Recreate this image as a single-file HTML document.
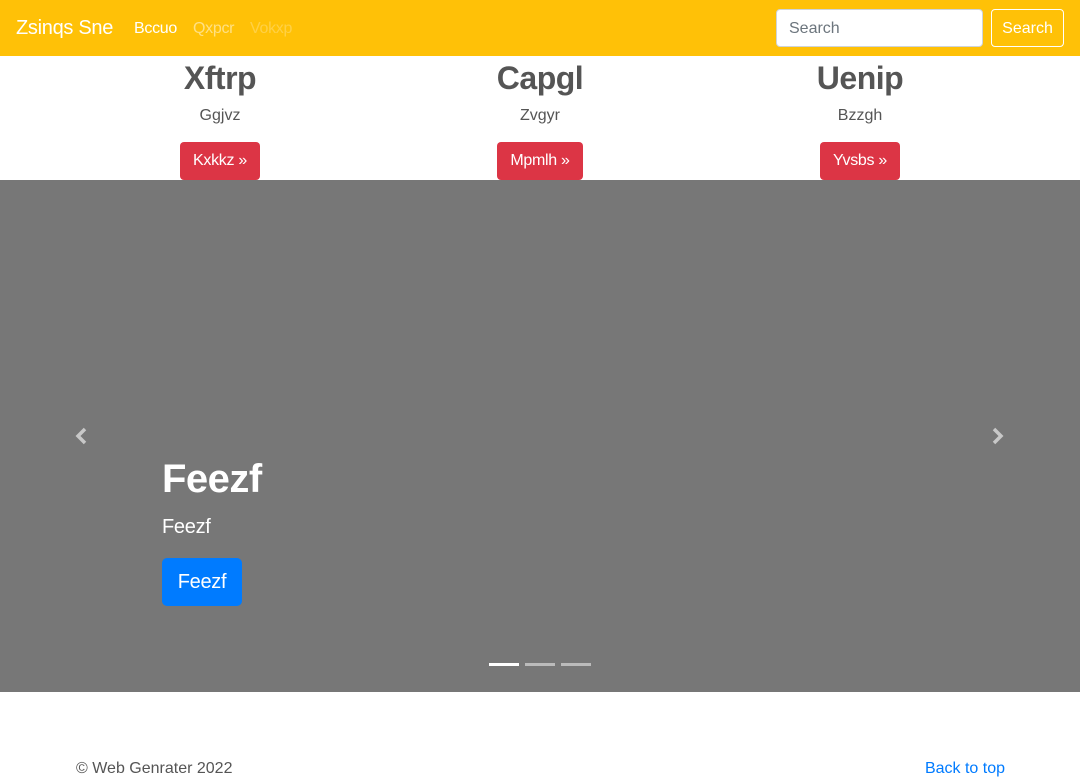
<!DOCTYPE html>
<html><head><style>
*{box-sizing:border-box;margin:0;padding:0}
body{width:1080px;height:780px;overflow:hidden;font-family:"Liberation Sans",sans-serif;background:#fff;color:#212529;position:relative}
nav{position:absolute;top:0;left:0;width:1080px;height:56px;background:#ffc107}
.brand{position:absolute;left:16px;top:17px;font-size:20px;color:#fff;letter-spacing:-0.3px}
.nl{position:absolute;top:20px;font-size:16px;letter-spacing:-0.3px}
.inp{position:absolute;left:776px;top:9px;width:207px;height:38px;background:#fff;border:1px solid #ced4da;border-radius:4px;font-size:16px;color:#6c757d;padding:10px 12px 0}
.sb{position:absolute;left:991px;top:9px;width:73px;height:38px;border:1px solid #fff;border-radius:4px;color:#fff;font-size:16px;text-align:center;line-height:38px}
.col{position:absolute;top:56px;width:320px;text-align:center;color:#555}
.col h2{font-size:32px;font-weight:bold;margin-top:2px;line-height:40px;letter-spacing:-0.5px}
.col p{font-size:16px;margin-top:6px;line-height:24px}
.col .b{display:inline-block;margin-top:14px;background:#dc3545;color:#fff;border-radius:4px;height:38px;line-height:38px;padding:0 13px;font-size:16px;letter-spacing:-0.3px}
.car{position:absolute;left:0;top:180px;width:1080px;height:512px;background:#777}
.cap{position:absolute;left:162px;top:275px;color:#fff}
.cap h1{font-size:40px;font-weight:bold;line-height:48px;letter-spacing:-0.5px}
.cap p{font-size:20px;margin-top:9px;line-height:30px;letter-spacing:-0.3px}
.cap .bb{display:inline-block;margin-top:16px;background:#007bff;border-radius:5px;width:80px;height:48px;line-height:48px;text-align:center;font-size:20px;letter-spacing:-0.3px}
.ind{position:absolute;top:483px;width:30px;height:3px;background:rgba(255,255,255,.5)}
footer{position:absolute;top:760px;left:76px;width:929px;font-size:16px;color:#555}
footer a{position:absolute;right:0;top:0;color:#007bff}
</style></head><body>
<nav>
<div class="brand">Zsinqs Sne</div>
<div class="nl" style="left:134px;color:#fff">Bccuo</div>
<div class="nl" style="left:193px;color:rgba(255,255,255,.5)">Qxpcr</div>
<div class="nl" style="left:250px;color:rgba(255,255,255,.25)">Vokxp</div>
<div class="inp">Search</div>
<div class="sb">Search</div>
</nav>
<div class="col" style="left:60px"><h2>Xftrp</h2><p>Ggjvz</p><span class="b">Kxkkz »</span></div>
<div class="col" style="left:380px"><h2>Capgl</h2><p>Zvgyr</p><span class="b">Mpmlh »</span></div>
<div class="col" style="left:700px"><h2>Uenip</h2><p>Bzzgh</p><span class="b">Yvsbs »</span></div>
<div class="car">
<svg style="position:absolute;left:73px;top:246px" width="16" height="20" viewBox="0 0 16 20"><path d="M12 3L5 10l7 7" stroke="#c8c8c8" stroke-width="3.5" fill="none"/></svg>
<svg style="position:absolute;left:990px;top:246px" width="16" height="20" viewBox="0 0 16 20"><path d="M4 3l7 7-7 7" stroke="#c8c8c8" stroke-width="3.5" fill="none"/></svg>
<div class="cap"><h1>Feezf</h1><p>Feezf</p><span class="bb">Feezf</span></div>
<div class="ind" style="left:489px;background:#fff"></div>
<div class="ind" style="left:525px"></div>
<div class="ind" style="left:561px"></div>
</div>
<footer>© Web Genrater 2022<a>Back to top</a></footer>
</body></html>
